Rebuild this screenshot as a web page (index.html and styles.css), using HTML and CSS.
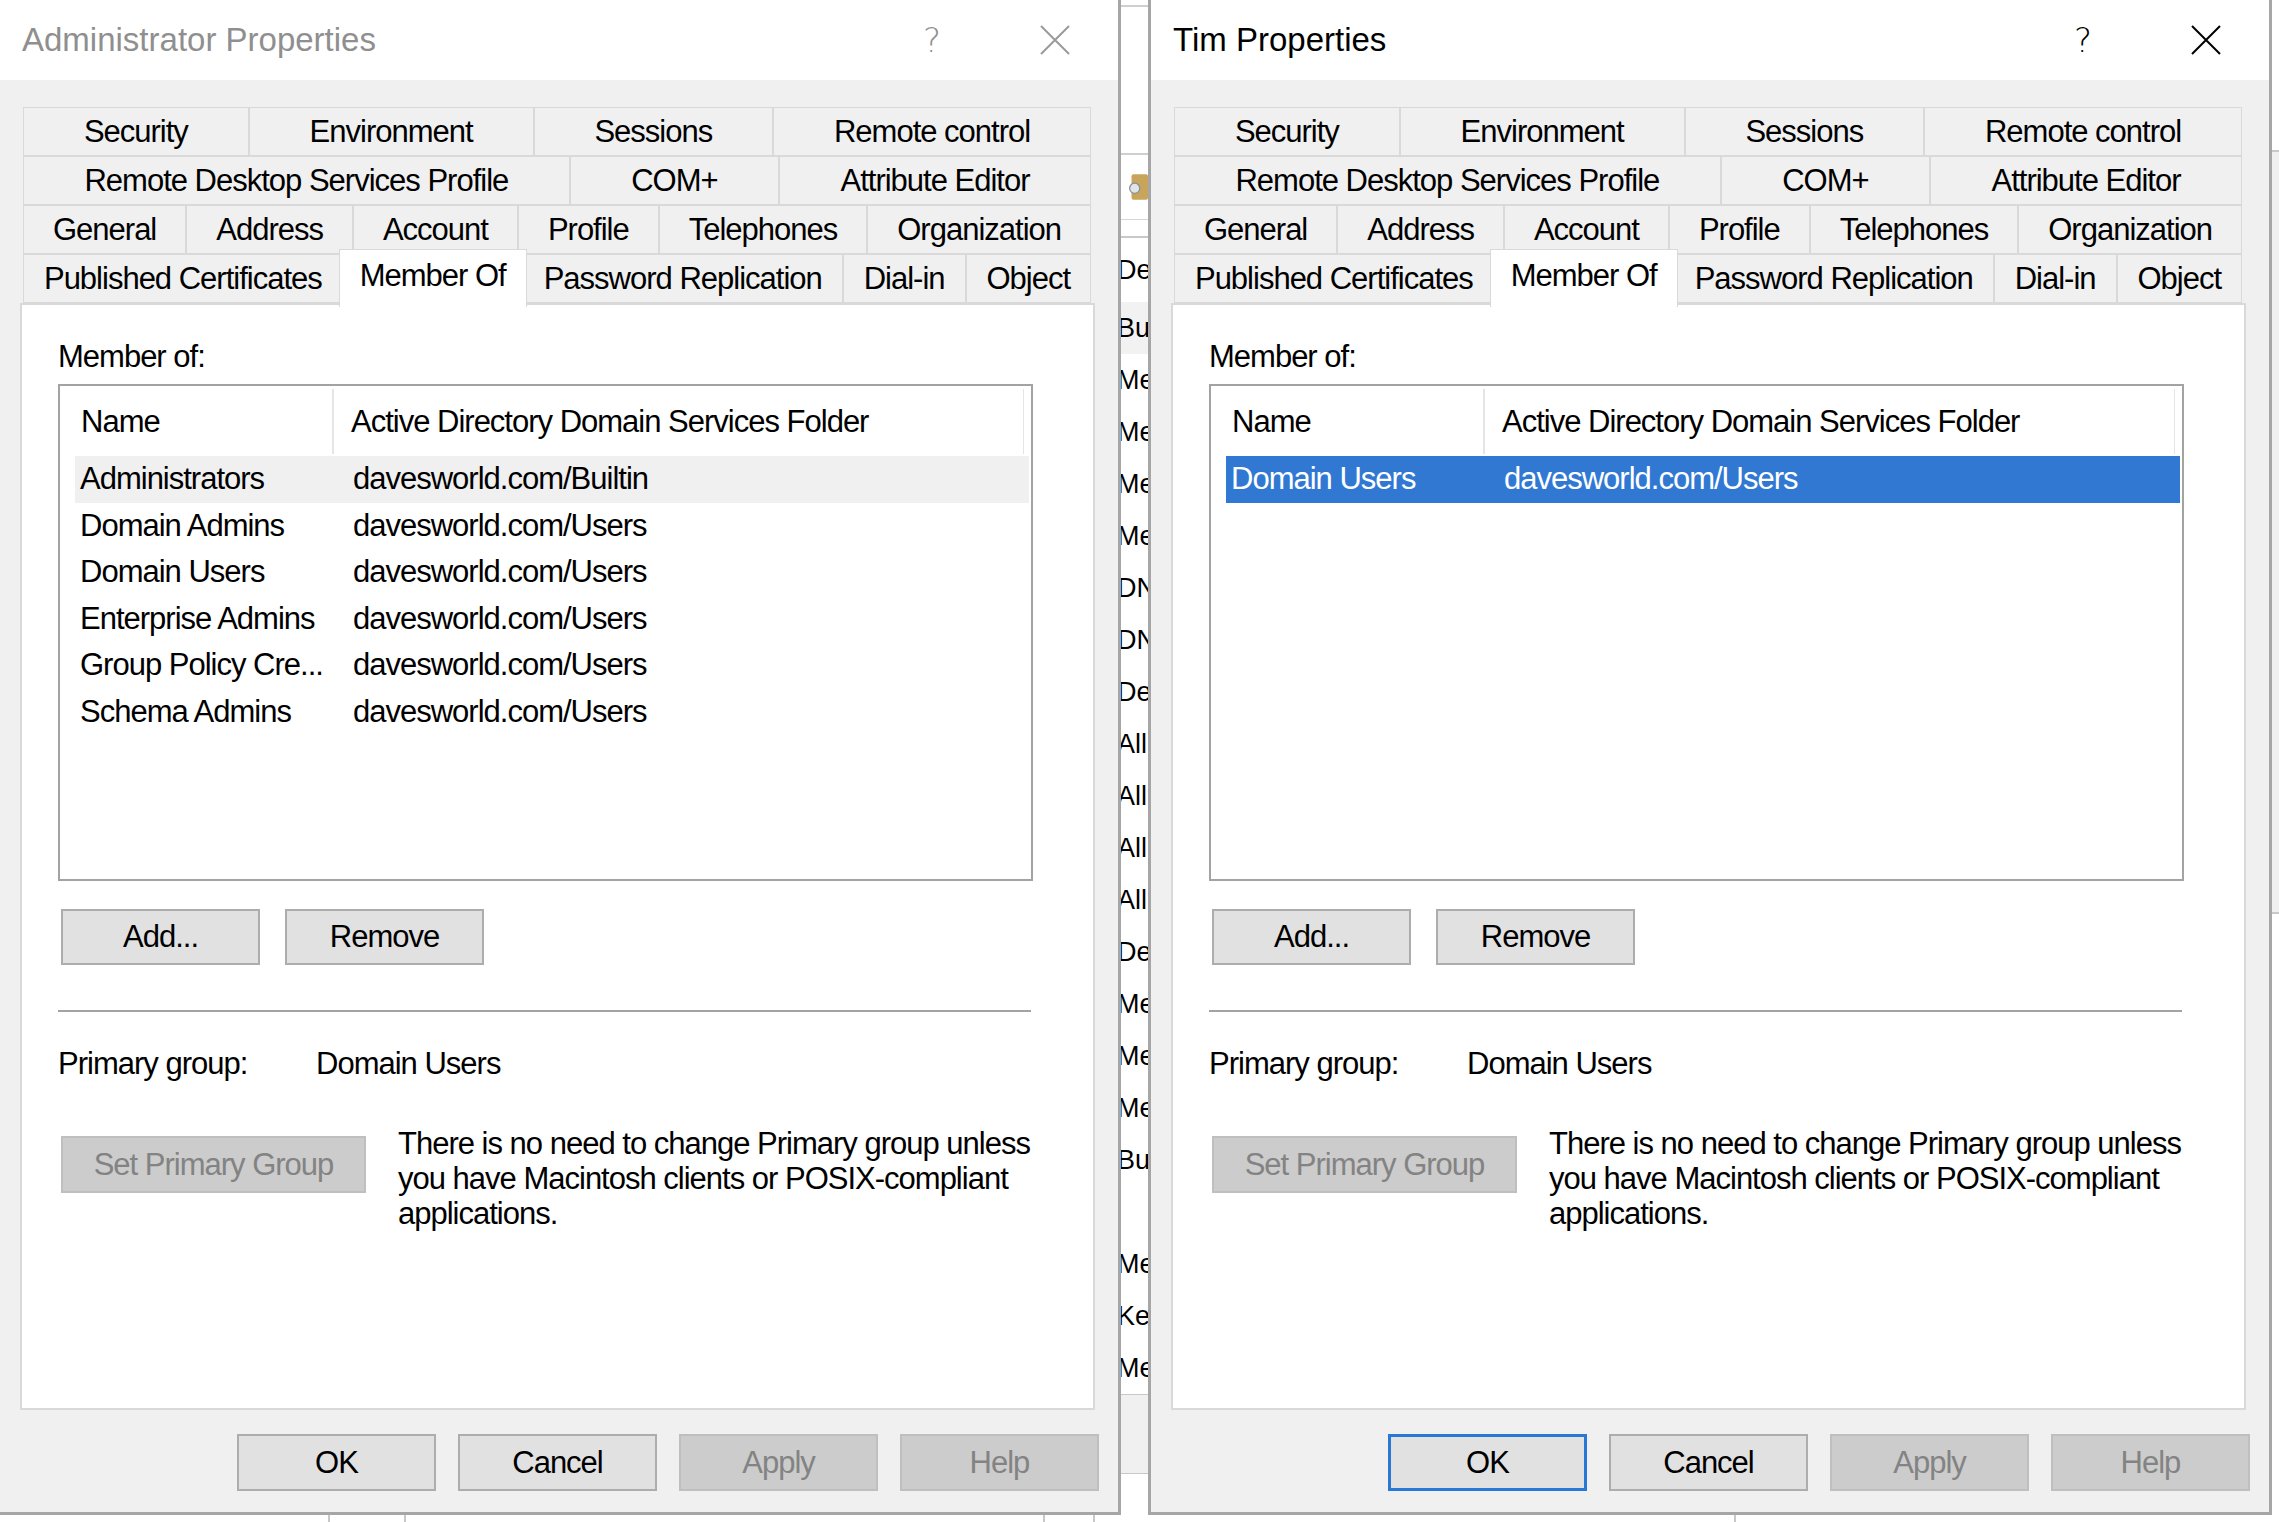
FILE: index.html
```html
<!DOCTYPE html>
<html lang="en">
<head>
  <meta charset="UTF-8">
  <meta name="viewport" content="width=device-width, initial-scale=1.0">
  <title>Administrator Properties - Tim Properties</title>
  <link rel="stylesheet" href="styles.css">
</head>
<body>
  <div class="desk">

    <div class="dialog inactive">
      <div class="titlebar">
        <span class="title">Administrator Properties</span>
        <span class="help">?</span>
        <svg class="close" viewBox="0 0 30 30"><path d="M1 1L29 29M29 1L1 29"/></svg>
      </div>
      <div class="dlg-body">
        <div class="tabctl">
          <div class="tabs">
            <div class="tab-row">
              <div class="tab">Security</div>
              <div class="tab">Environment</div>
              <div class="tab">Sessions</div>
              <div class="tab">Remote control</div>
            </div>
            <div class="tab-row">
              <div class="tab">Remote Desktop Services Profile</div>
              <div class="tab">COM+</div>
              <div class="tab">Attribute Editor</div>
            </div>
            <div class="tab-row">
              <div class="tab">General</div>
              <div class="tab">Address</div>
              <div class="tab">Account</div>
              <div class="tab">Profile</div>
              <div class="tab">Telephones</div>
              <div class="tab">Organization</div>
            </div>
            <div class="tab-row">
              <div class="tab">Published Certificates</div>
              <div class="tab sel">Member Of</div>
              <div class="tab">Password Replication</div>
              <div class="tab">Dial-in</div>
              <div class="tab">Object</div>
            </div>
          </div>
          <div class="panel">
            <div class="label">Member of:</div>
            <div class="listbox">
              <div class="lv-head">
                <div class="col-name">Name</div>
                <div class="col-folder">Active Directory Domain Services Folder</div>
              </div>
              <div class="lv-rows">
                <div class="lv-row hot"><span class="cell-name">Administrators</span><span>davesworld.com/Builtin</span></div>
                <div class="lv-row"><span class="cell-name">Domain Admins</span><span>davesworld.com/Users</span></div>
                <div class="lv-row"><span class="cell-name">Domain Users</span><span>davesworld.com/Users</span></div>
                <div class="lv-row"><span class="cell-name">Enterprise Admins</span><span>davesworld.com/Users</span></div>
                <div class="lv-row"><span class="cell-name">Group Policy Cre...</span><span>davesworld.com/Users</span></div>
                <div class="lv-row"><span class="cell-name">Schema Admins</span><span>davesworld.com/Users</span></div>
              </div>
            </div>
            <div class="btn-row">
              <button class="btn">Add...</button>
              <button class="btn">Remove</button>
            </div>
            <div class="sep"></div>
            <div class="primary"><span class="primary-label">Primary group:</span><span>Domain Users</span></div>
            <div class="set-primary">
              <button class="btn wide" disabled>Set Primary Group</button>
              <p class="note">There is no need to change Primary group unless<br>you have Macintosh clients or POSIX-compliant<br>applications.</p>
            </div>
          </div>
        </div>
        <div class="footer">
          <button class="btn">OK</button>
          <button class="btn">Cancel</button>
          <button class="btn" disabled>Apply</button>
          <button class="btn" disabled>Help</button>
        </div>
      </div>
    </div>

    <!-- the ADUC window behind, only a sliver shows -->
    <div class="bgwin">
      <div class="bg-top"></div>
      <div class="bg-tool">
        <svg class="bg-icon" viewBox="0 0 30 44"><rect x="4" y="2" width="26" height="40" rx="3" fill="#c9a55c"/><circle cx="9" cy="24" r="8" fill="#dfe4e8" stroke="#8a8f96" stroke-width="2"/></svg>
      </div>
      <div class="bg-band"></div>
      <div class="bg-list">
        <div class="bg-row head">De</div>
        <div class="bg-row hot">Bu</div>
        <div class="bg-row">Me</div>
        <div class="bg-row">Me</div>
        <div class="bg-row">Me</div>
        <div class="bg-row">Me</div>
        <div class="bg-row">DN</div>
        <div class="bg-row">DN</div>
        <div class="bg-row">De</div>
        <div class="bg-row">All</div>
        <div class="bg-row">All</div>
        <div class="bg-row">All</div>
        <div class="bg-row">All</div>
        <div class="bg-row">De</div>
        <div class="bg-row">Me</div>
        <div class="bg-row">Me</div>
        <div class="bg-row">Me</div>
        <div class="bg-row">Bu</div>
        <div class="bg-row"></div>
        <div class="bg-row">Me</div>
        <div class="bg-row">Ke</div>
        <div class="bg-row">Me</div>
      </div>
      <div class="bg-status"></div>
    </div>

    <div class="dialog active">
      <div class="titlebar">
        <span class="title">Tim Properties</span>
        <span class="help">?</span>
        <svg class="close" viewBox="0 0 30 30"><path d="M1 1L29 29M29 1L1 29"/></svg>
      </div>
      <div class="dlg-body">
        <div class="tabctl">
          <div class="tabs">
            <div class="tab-row">
              <div class="tab">Security</div>
              <div class="tab">Environment</div>
              <div class="tab">Sessions</div>
              <div class="tab">Remote control</div>
            </div>
            <div class="tab-row">
              <div class="tab">Remote Desktop Services Profile</div>
              <div class="tab">COM+</div>
              <div class="tab">Attribute Editor</div>
            </div>
            <div class="tab-row">
              <div class="tab">General</div>
              <div class="tab">Address</div>
              <div class="tab">Account</div>
              <div class="tab">Profile</div>
              <div class="tab">Telephones</div>
              <div class="tab">Organization</div>
            </div>
            <div class="tab-row">
              <div class="tab">Published Certificates</div>
              <div class="tab sel">Member Of</div>
              <div class="tab">Password Replication</div>
              <div class="tab">Dial-in</div>
              <div class="tab">Object</div>
            </div>
          </div>
          <div class="panel">
            <div class="label">Member of:</div>
            <div class="listbox">
              <div class="lv-head">
                <div class="col-name">Name</div>
                <div class="col-folder">Active Directory Domain Services Folder</div>
              </div>
              <div class="lv-rows">
                <div class="lv-row selected"><span class="cell-name">Domain Users</span><span>davesworld.com/Users</span></div>
              </div>
            </div>
            <div class="btn-row">
              <button class="btn">Add...</button>
              <button class="btn">Remove</button>
            </div>
            <div class="sep"></div>
            <div class="primary"><span class="primary-label">Primary group:</span><span>Domain Users</span></div>
            <div class="set-primary">
              <button class="btn wide" disabled>Set Primary Group</button>
              <p class="note">There is no need to change Primary group unless<br>you have Macintosh clients or POSIX-compliant<br>applications.</p>
            </div>
          </div>
        </div>
        <div class="footer">
          <button class="btn default">OK</button>
          <button class="btn">Cancel</button>
          <button class="btn" disabled>Apply</button>
          <button class="btn" disabled>Help</button>
        </div>
      </div>
    </div>

    <div class="edge">
      <div class="edge-top"></div>
      <div class="edge-mid"></div>
    </div>
  </div>

  <div class="bg-foot">
    <div class="foot-cell w1"></div>
    <div class="foot-cell w2"></div>
    <div class="foot-cell w3"></div>
    <div class="foot-cell w4"></div>
    <div class="foot-cell w5"></div>
  </div>
</body>
</html>
```

FILE: styles.css
```css
body {
  margin: 0;
  background: #fff;
  font-family: "Liberation Sans", Arial, sans-serif;
  font-size: 31px;
  letter-spacing: -1px;
  color: #000;
  overflow: hidden;
}
.desk {
  display: flex;
  height: 1515px;
}

/* dialog frame */
.dialog {
  flex: none;
  width: 1121px;
  height: 1515px;
  box-sizing: border-box;
  border-right: 3px solid #a6a6a6;
  border-bottom: 3px solid #a6a6a6;
  background: #f0f0f0;
  display: flex;
  flex-direction: column;
}
.dialog.active {
  width: 1124px;
  border-left: 3px solid #a6a6a6;
}
.titlebar {
  flex: none;
  height: 80px;
  background: #fff;
  display: flex;
  align-items: center;
}
.title {
  flex: 1;
  padding-left: 22px;
  font-size: 33px;
  letter-spacing: 0;
}
.help {
  width: 40px;
  text-align: center;
  font-family: "DejaVu Sans", sans-serif;
  font-weight: 200;
  font-size: 34px;
  letter-spacing: 0;
}
.close {
  width: 30px;
  height: 30px;
  margin: 0 48px 0 88px;
  fill: none;
  stroke: #000;
  stroke-width: 2;
}
.inactive .title,
.inactive .help { color: #8f8f8f; }
.inactive .close { stroke: #9a9a9a; }

.dlg-body {
  flex: 1;
  padding: 27px 0 0 20px;
  display: flex;
  flex-direction: column;
}

/* tabs */
.tabctl { width: 1075px; }
.tabs { margin: 0 4px 0 3px; }
.tab-row {
  display: flex;
  height: 49px;
}
.tab {
  flex: 1 1 auto;
  height: 49px;
  box-sizing: border-box;
  border: 1px solid #d9d9d9;
  background: #f0f0f0;
  display: flex;
  align-items: center;
  justify-content: center;
  white-space: nowrap;
}
.tab.sel {
  position: relative;
  z-index: 1;
  height: 58px;
  margin: -5px -4px 0;
  background: #fff;
  border-bottom: none;
  align-items: flex-start;
  padding-top: 8px;
}

/* page */
.panel {
  height: 1107px;
  box-sizing: border-box;
  border: 2px solid #d9d9d9;
  background: #fff;
  padding-left: 36px;
}
.label {
  margin-top: 34px;
  line-height: 36px;
}
.listbox {
  margin-top: 9px;
  width: 975px;
  height: 497px;
  box-sizing: border-box;
  border: 2px solid #a3a3a3;
}
.lv-head {
  display: flex;
  height: 68px;
}
.col-name,
.col-folder {
  margin-top: 3px;
  box-sizing: border-box;
  display: flex;
  align-items: center;
  white-space: nowrap;
}
.col-name {
  width: 274px;
  padding-left: 21px;
  border-right: 2px solid #e5e5e5;
}
.col-folder {
  width: 690px;
  padding-left: 17px;
  border-right: 1px solid #e5e5e5;
}
.lv-rows { padding: 2px 2px 0 15px; }
.lv-row {
  display: flex;
  align-items: center;
  height: 46.5px;
  white-space: nowrap;
}
.lv-row.hot { background: #f0f0f0; }
.lv-row.selected {
  background: #3178d3;
  color: #fff;
}
.cell-name {
  width: 278px;
  padding-left: 5px;
  box-sizing: border-box;
}

/* buttons */
.btn {
  width: 199px;
  height: 56px;
  padding: 0;
  font: inherit;
  letter-spacing: inherit;
  color: #000;
  background: #e1e1e1;
  border: 2px solid #adadad;
}
.btn:disabled {
  background: #cccccc;
  border-color: #bfbfbf;
  color: #838383;
}
.btn.default { border: 3px solid #2a78d6; }
.btn-row {
  margin: 28px 0 0 3px;
  display: flex;
  gap: 25px;
}
.sep {
  margin-top: 45px;
  width: 973px;
  height: 2px;
  background: #a3a3a3;
}
.primary {
  margin-top: 34px;
  line-height: 36px;
  display: flex;
}
.primary-label { width: 258px; }
.set-primary {
  margin: 54px 0 0 3px;
  display: flex;
  align-items: flex-start;
  gap: 32px;
}
.btn.wide {
  width: 305px;
  height: 57px;
}
.note {
  margin: -10px 0 0;
  line-height: 35px;
}
.footer {
  margin-top: 24px;
  padding-right: 19px;
  display: flex;
  justify-content: flex-end;
  gap: 22px;
}
.footer .btn { height: 57px; }

/* window behind the dialogs */
.bgwin {
  flex: none;
  width: 27px;
  overflow: hidden;
  background: #fff;
  font-size: 27px;
  letter-spacing: 0;
  display: flex;
  flex-direction: column;
}
.bg-top {
  flex: none;
  height: 146px;
  margin-top: 5px;
  border-top: 2px solid #cfcfcf;
  border-bottom: 2px solid #cfcfcf;
}
.bg-tool {
  flex: none;
  height: 64px;
  border-bottom: 1px solid #d6d6d6;
  display: flex;
  align-items: center;
}
.bg-icon {
  width: 30px;
  height: 44px;
  margin-left: 8px;
}
.bg-band {
  flex: none;
  height: 16px;
  border-bottom: 2px solid #c8c8c8;
}
.bg-row {
  height: 52px;
  line-height: 52px;
  white-space: nowrap;
  text-indent: -4px;
}
.bg-row.head {
  height: 64px;
  line-height: 64px;
}
.bg-row.hot { background: #f2f2f2; }
.bg-status {
  flex: none;
  height: 78px;
  background: #f0f0f0;
  border-top: 1px solid #c8c8c8;
  border-bottom: 1px solid #c8c8c8;
}
.edge {
  flex: 1;
  display: flex;
  flex-direction: column;
}
.edge-top {
  height: 150px;
  border-bottom: 2px solid #c8c8c8;
}
.edge-mid {
  height: 760px;
  background: #f0f0f0;
  border-bottom: 2px solid #c8c8c8;
}
.bg-foot {
  display: flex;
  height: 7px;
}
.foot-cell {
  flex: none;
  box-sizing: border-box;
  border-right: 2px solid #c8c8c8;
}
.w1 { width: 330px; }
.w2 { width: 76px; }
.w3 { width: 639px; }
.w4 { width: 50px; }
.w5 { width: 641px; }
```
